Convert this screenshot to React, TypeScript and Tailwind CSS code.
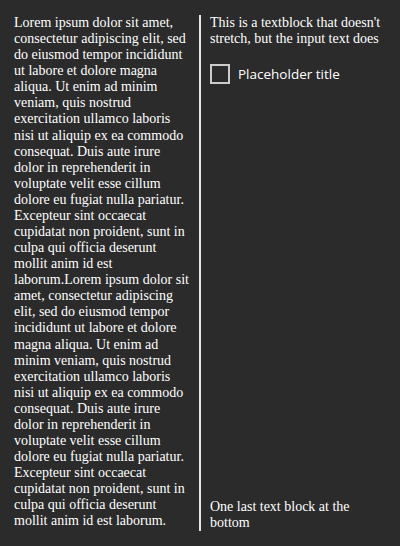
export default function App() {
  const lorem =
    "Lorem ipsum dolor sit amet, consectetur adipiscing elit, sed do eiusmod tempor incididunt ut labore et dolore magna aliqua. Ut enim ad minim veniam, quis nostrud exercitation ullamco laboris nisi ut aliquip ex ea commodo consequat. Duis aute irure dolor in reprehenderit in voluptate velit esse cillum dolore eu fugiat nulla pariatur. Excepteur sint occaecat cupidatat non proident, sunt in culpa qui officia deserunt mollit anim id est laborum.";

  return (
    <div className="flex h-[546px] w-[400px] bg-[#2b2b2b] py-[15px] text-white font-['Liberation_Serif',serif] text-[14px] leading-[16px]">
      <div className="w-[199px] shrink-0 pl-[14px] pr-[9px]">
        <p className="leading-[16.08px]">
          {lorem}
          {lorem}
        </p>
      </div>
      <div className="w-[2px] shrink-0 bg-[#e6e6e6]" />
      <div className="flex flex-1 flex-col justify-between pl-[9px] pr-[10px]">
        <div>
          <p>This is a textblock that doesn't stretch, but the input text does</p>
          <label className="mt-[17px] flex items-center gap-[8px]">
            <span className="h-[20px] w-[20px] border-2 border-[#cccccc]" />
            <span className="font-['Open_Sans',sans-serif] text-[13.5px] leading-[20px] text-white">
              Placeholder title
            </span>
          </label>
        </div>
        <p>One last text block at the bottom</p>
      </div>
    </div>
  );
}
